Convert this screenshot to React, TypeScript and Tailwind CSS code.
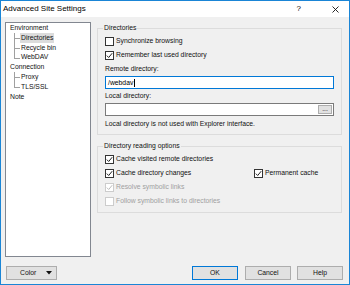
import React from "react";

function Check({ checked, disabled }: { checked?: boolean; disabled?: boolean }) {
  return (
    <span
      className={`flex h-[9px] w-[9px] shrink-0 items-center justify-center border bg-white ${
        disabled ? "border-[#cccccc]" : "border-[#333333]"
      }`}
    >
      {checked && (
        <svg width="7" height="7" viewBox="0 0 7 7">
          <path
            d="M0.8 3.6 L2.7 5.5 L6.2 1.2"
            fill="none"
            stroke={disabled ? "#bcbcbc" : "#222222"}
            strokeWidth="1"
          />
        </svg>
      )}
    </span>
  );
}

function CheckRow({
  label,
  checked,
  disabled,
}: {
  label: string;
  checked?: boolean;
  disabled?: boolean;
}) {
  return (
    <div className="flex h-[14px] items-center gap-[2px]">
      <Check checked={checked} disabled={disabled} />
      <span className={disabled ? "text-[#a0a0a0]" : "text-[#111]"}>{label}</span>
    </div>
  );
}

function Button({
  children,
  primary,
  className = "",
}: {
  children: React.ReactNode;
  primary?: boolean;
  className?: string;
}) {
  return (
    <div
      className={`flex h-[14px] items-center border bg-[#e1e1e1] text-[#111] ${
        primary ? "border-[#0078d7]" : "border-[#adadad]"
      } ${className}`}
    >
      {children}
    </div>
  );
}

const tree = [
  { label: "Environment", level: 0 },
  { label: "Directories", level: 1, selected: true },
  { label: "Recycle bin", level: 1 },
  { label: "WebDAV", level: 1, last: true },
  { label: "Connection", level: 0 },
  { label: "Proxy", level: 1 },
  { label: "TLS/SSL", level: 1, last: true },
  { label: "Note", level: 0 },
];

export default function App() {
  return (
    <div
      className="flex h-[285px] w-[350px] flex-col border border-[#1a85d6] bg-[#f0f0f0] text-[6.8px] leading-[10px] text-[#111]"
      style={{ fontFamily: '"Liberation Sans", Arial, sans-serif' }}
    >
      {/* title bar */}
      <div className="flex h-[16px] shrink-0 items-center bg-white pl-[2px]">
        <span className="text-[8px] text-black">Advanced Site Settings</span>
        <span className="ml-auto mr-[31px] text-[8px] text-black">?</span>
        <svg className="mr-[10px]" width="7" height="7" viewBox="0 0 7 7">
          <path d="M0.5 0.5 L6.5 6.5 M6.5 0.5 L0.5 6.5" stroke="#111" strokeWidth="0.9" />
        </svg>
      </div>

      <div className="flex flex-1 flex-col px-[4px] pt-[5px] pb-[4px]">
        <div className="flex flex-1 gap-[6px]">
          {/* tree */}
          <div className="w-[86px] shrink-0 border border-[#828790] bg-white">
            {tree.map((item, i) => (
              <div key={i} className="relative flex h-[9.85px] items-center">
                {item.level === 1 && (
                  <>
                    <span
                      className={`absolute left-[8px] top-0 w-px bg-[#a0a0a0] ${
                        item.last ? "h-[5px]" : "h-full"
                      }`}
                    />
                    <span className="absolute left-[8px] top-[5px] h-px w-[6px] bg-[#a0a0a0]" />
                  </>
                )}
                <span
                  className={`${item.level === 0 ? "ml-[3px]" : "ml-[14px]"} px-px ${
                    item.selected ? "bg-[#dcdcdc]" : ""
                  }`}
                >
                  {item.label}
                </span>
              </div>
            ))}
          </div>

          {/* right side */}
          <div className="flex flex-1 flex-col pt-[1px] pr-[3px]">
            <fieldset className="border border-[#dcdcdc] px-[7px] pb-[4px]">
              <legend className="ml-[-2px] px-px">Directories</legend>
              <div className="mt-[1px]">
                <CheckRow label="Synchronize browsing" />
                <CheckRow label="Remember last used directory" checked />
                <div className="flex h-[14px] items-center">Remote directory:</div>
                <div className="flex h-[13px] items-center border border-[#0078d7] bg-white pl-[2px] text-black">
                  /webdav
                  <span className="ml-px h-[8px] w-px bg-black" />
                </div>
                <div className="flex h-[14px] items-center">Local directory:</div>
                <div className="flex h-[13px] items-center justify-end border border-[#7a7a7a] bg-white pr-px">
                  <div className="flex h-[9px] w-[14px] items-center justify-center border border-[#adadad] bg-[#e1e1e1] leading-none">
                    ...
                  </div>
                </div>
                <div className="flex h-[14px] items-center pt-[2px]">
                  Local directory is not used with Explorer interface.
                </div>
              </div>
            </fieldset>

            <fieldset className="mt-[6px] border border-[#dcdcdc] px-[7px] pb-[4px]">
              <legend className="ml-[-2px] px-px">Directory reading options</legend>
              <div className="mt-[1px]">
                <CheckRow label="Cache visited remote directories" checked />
                <div className="flex">
                  <div className="w-[149px]">
                    <CheckRow label="Cache directory changes" checked />
                  </div>
                  <CheckRow label="Permanent cache" checked />
                </div>
                <CheckRow label="Resolve symbolic links" checked disabled />
                <CheckRow label="Follow symbolic links to directories" disabled />
              </div>
            </fieldset>
          </div>
        </div>

        {/* bottom buttons */}
        <div className="mt-[9px] flex items-center">
          <Button className="ml-px w-[51px] pl-[13px]">
            <span>Color</span>
            <svg width="6" height="4" viewBox="0 0 6 4" className="ml-auto mr-[4px]">
              <path d="M0 0 L6 0 L3 3.5 Z" fill="#111" />
            </svg>
          </Button>
          <Button primary className="ml-auto w-[46px] justify-center">
            OK
          </Button>
          <Button className="ml-[7px] w-[46px] justify-center">Cancel</Button>
          <Button className="ml-[6px] mr-[2px] w-[46px] justify-center">Help</Button>
        </div>
      </div>
    </div>
  );
}
